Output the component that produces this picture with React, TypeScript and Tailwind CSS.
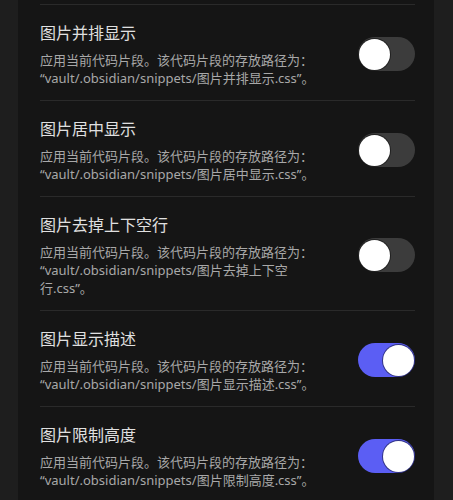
import React, { useState } from 'react';

type Snippet = {
  name: string;
  enabled: boolean;
};

const initialSnippets: Snippet[] = [
  { name: '图片并排显示', enabled: false },
  { name: '图片居中显示', enabled: false },
  { name: '图片去掉上下空行', enabled: false },
  { name: '图片显示描述', enabled: true },
  { name: '图片限制高度', enabled: true },
];

function Toggle({ on, onClick }: { on: boolean; onClick: () => void }) {
  return (
    <button
      onClick={onClick}
      className={
        on
          ? 'flex h-[34px] w-[57px] shrink-0 items-center justify-end rounded-full bg-[#5b5ef4] px-[1px]'
          : 'flex h-[34px] w-[57px] shrink-0 items-center justify-start rounded-full bg-[#3c3c3c] px-[1px]'
      }
    >
      <span className="block h-[31px] w-[31px] rounded-full bg-white shadow-[0_0_0_1px_rgba(0,0,0,0.45)]" />
    </button>
  );
}

export default function App() {
  const [snippets, setSnippets] = useState(initialSnippets);

  const toggle = (i: number) => {
    setSnippets(prev => prev.map((s, j) => (j === i ? { ...s, enabled: !s.enabled } : s)));
  };

  return (
    <div
      className="flex h-[500px] w-full overflow-hidden bg-[#1e1e1e] pl-[18px] pr-[19px]"
      style={{ fontFamily: '"Noto Sans", "Noto Sans CJK SC", sans-serif' }}
    >
      <div className="flex-1 bg-[#151515] pl-[22px] pr-[19px] pt-[4px]">
        {snippets.map((s, i) => (
          <div key={s.name} className="flex items-center border-t border-[#2a2a2a] pb-[13px] pt-[16px]">
            <div className="w-[282px]">
              <div className="text-[16px] leading-[24px] text-[#e0e0e0]">{s.name}</div>
              <div className="mt-[6px] text-[13px] leading-[18px] text-[#a8a8a8]">
                应用当前代码片段。该代码片段的存放路径为：
                <br />
                “vault/.obsidian/snippets/{s.name}.css”。
              </div>
            </div>
            <div className="flex flex-1 justify-end">
              <Toggle on={s.enabled} onClick={() => toggle(i)} />
            </div>
          </div>
        ))}
      </div>
    </div>
  );
}
